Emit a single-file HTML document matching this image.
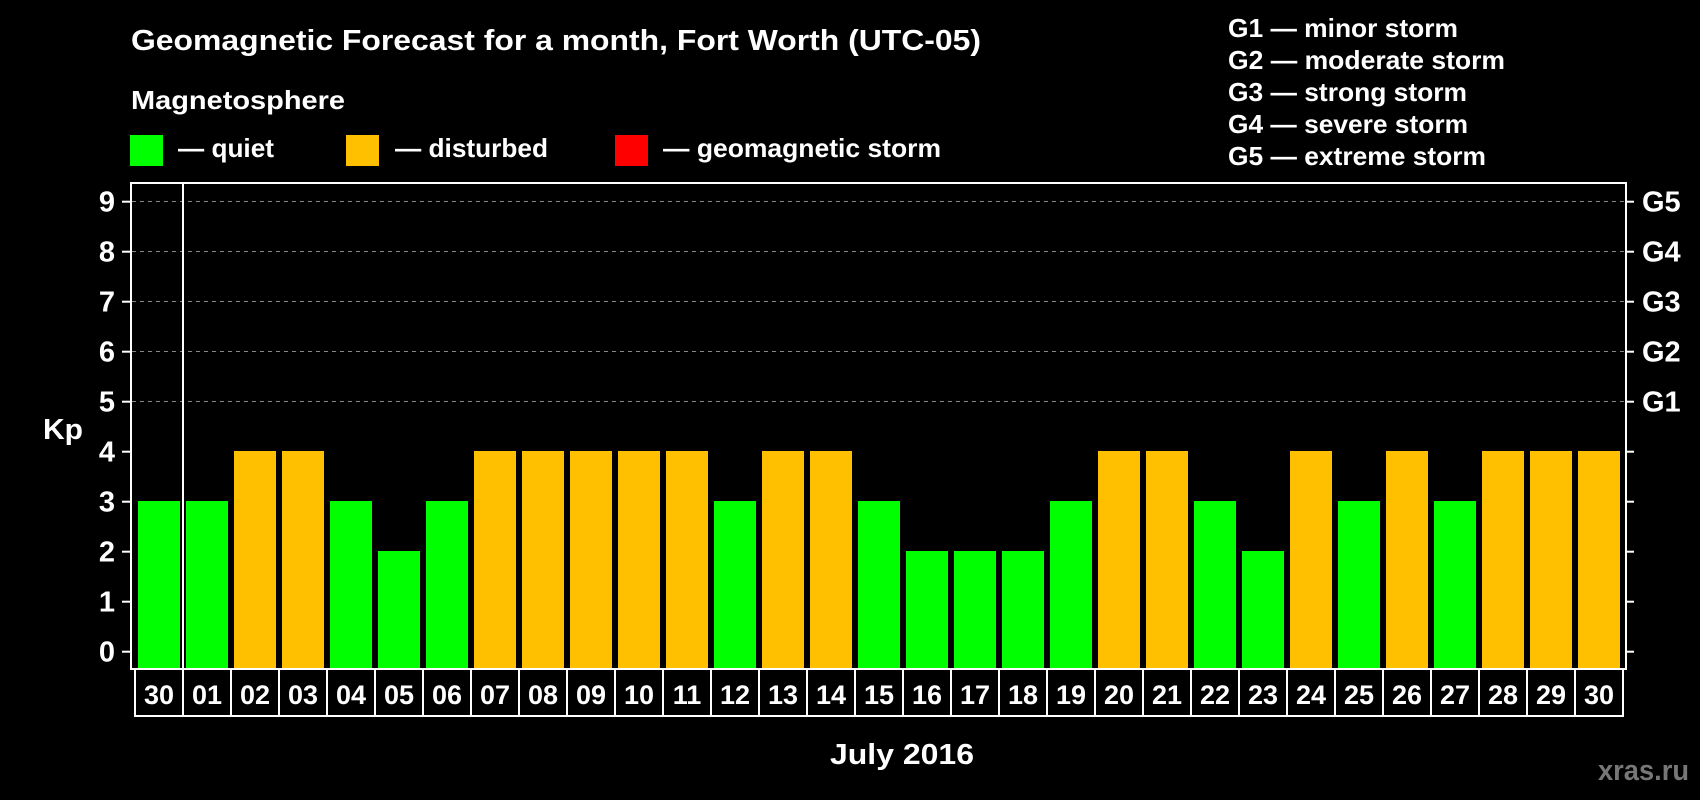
<!DOCTYPE html>
<html><head><meta charset="utf-8"><style>
html,body{margin:0;padding:0;background:#000;width:1700px;height:800px;overflow:hidden}
svg{display:block}
text{font-family:"Liberation Sans",Arial,sans-serif;font-weight:bold;fill:#fff}
</style></head><body>
<svg width="1700" height="800" viewBox="0 0 1700 800" xmlns="http://www.w3.org/2000/svg">
<text x="131" y="50" font-size="29" textLength="850" lengthAdjust="spacingAndGlyphs">Geomagnetic Forecast for a month, Fort Worth (UTC-05)</text>
<text x="131" y="109" font-size="26" textLength="214" lengthAdjust="spacingAndGlyphs">Magnetosphere</text>
<rect x="130" y="135" width="33" height="31" fill="#00ff00"/>
<text x="178" y="157" font-size="26" textLength="96" lengthAdjust="spacingAndGlyphs">— quiet</text>
<rect x="346" y="135" width="33" height="31" fill="#ffc000"/>
<text x="395" y="157" font-size="26" textLength="153" lengthAdjust="spacingAndGlyphs">— disturbed</text>
<rect x="615" y="135" width="33" height="31" fill="#ff0000"/>
<text x="663" y="157" font-size="26" textLength="278" lengthAdjust="spacingAndGlyphs">— geomagnetic storm</text>
<g font-size="26">
<text x="1228" y="37" textLength="230" lengthAdjust="spacingAndGlyphs">G1 — minor storm</text>
<text x="1228" y="69" textLength="277" lengthAdjust="spacingAndGlyphs">G2 — moderate storm</text>
<text x="1228" y="101" textLength="239" lengthAdjust="spacingAndGlyphs">G3 — strong storm</text>
<text x="1228" y="133" textLength="240" lengthAdjust="spacingAndGlyphs">G4 — severe storm</text>
<text x="1228" y="165" textLength="258" lengthAdjust="spacingAndGlyphs">G5 — extreme storm</text>
</g>
<g stroke="#888" stroke-width="1" stroke-dasharray="4,4">
<line x1="132" y1="201.5" x2="1625" y2="201.5"/>
<line x1="132" y1="251.5" x2="1625" y2="251.5"/>
<line x1="132" y1="301.5" x2="1625" y2="301.5"/>
<line x1="132" y1="351.5" x2="1625" y2="351.5"/>
<line x1="132" y1="401.5" x2="1625" y2="401.5"/>
</g>
<g id="bars"></g>
<rect x="131" y="183" width="1495" height="486" fill="none" stroke="#fff" stroke-width="2"/>
<line x1="183" y1="183" x2="183" y2="669" stroke="#fff" stroke-width="2"/>
<g id="ticks" stroke="#fff" stroke-width="2"></g>
<g id="lab" font-size="29" text-anchor="end"></g>
<g id="glab" font-size="29"></g>
<text x="43" y="439" font-size="29" textLength="40" lengthAdjust="spacingAndGlyphs">Kp</text>
<rect x="135" y="669" width="1488" height="47" fill="none" stroke="#fff" stroke-width="2"/>
<g id="cells"></g>
<text x="830" y="764" font-size="29" textLength="144" lengthAdjust="spacingAndGlyphs">July 2016</text>
<text x="1598" y="780" font-size="29" textLength="91" lengthAdjust="spacingAndGlyphs" style="fill:#777">xras.ru</text>
</svg>
<script>
var ns="http://www.w3.org/2000/svg";
function el(p,t,a,txt){var e=document.createElementNS(ns,t);for(var k in a)e.setAttribute(k,a[k]);if(txt!=null)e.textContent=txt;document.getElementById(p).appendChild(e);}
var days=["30","01","02","03","04","05","06","07","08","09","10","11","12","13","14","15","16","17","18","19","20","21","22","23","24","25","26","27","28","29","30"];
var kp=[3,3,4,4,3,2,3,4,4,4,4,4,3,4,4,3,2,2,2,3,4,4,3,2,4,3,4,3,4,4,4];
for(var i=0;i<31;i++){var x=135+48*i;var h=kp[i]*50+17;
el("bars","rect",{x:x+3,y:668-h,width:42,height:h,fill:kp[i]>=4?"#ffc000":"#00ff00"});
if(i>0)el("cells","line",{x1:x,y1:669,x2:x,y2:716,stroke:"#fff","stroke-width":2});
el("cells","text",{x:x+24,y:704,"font-size":"27","text-anchor":"middle"},days[i]);}
for(var k=0;k<=9;k++){var y=651.7-50*k;
el("ticks","line",{x1:122,y1:y,x2:131,y2:y});
el("ticks","line",{x1:1626,y1:y,x2:1634,y2:y});
el("lab","text",{x:115,y:y+10},String(k));
if(k>=5)el("glab","text",{x:1642,y:y+10},"G"+(k-4));}
</script>
</body></html>
